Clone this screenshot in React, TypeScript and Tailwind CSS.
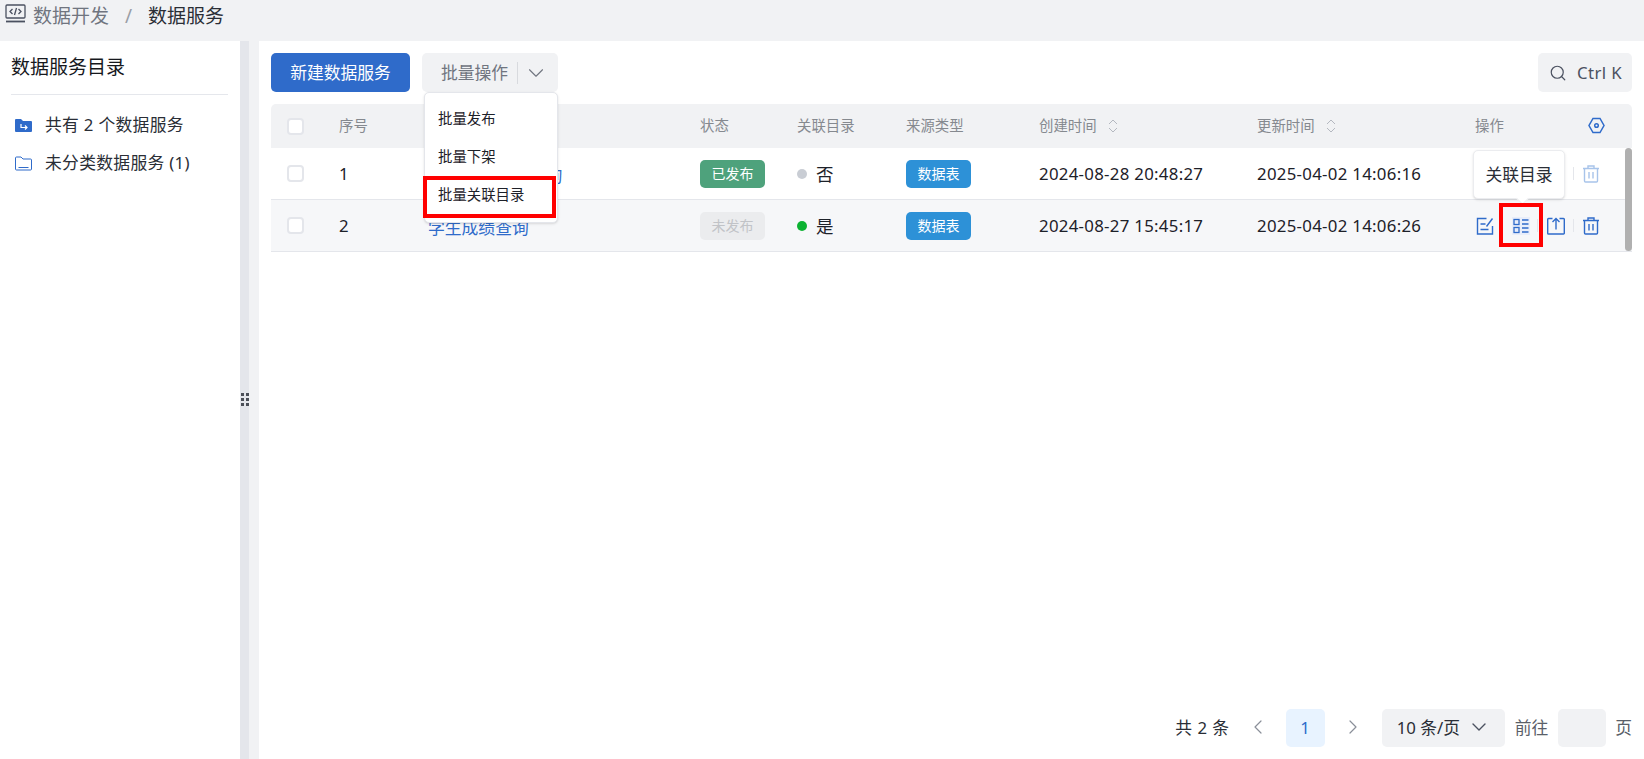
import React from "react";
import { ChevronDown, ChevronLeft, ChevronRight, Search } from "lucide-react";

const font = { fontFamily: '"Noto Sans", "Noto Sans CJK SC", sans-serif' };
const cols = "grid grid-cols-[68px_89px_272px_97px_109px_133px_218px_218px_1fr] items-center";

function Checkbox() {
  return <div className="ml-[16px] w-[17px] h-[17px] rounded-[4px] border-2 border-[#e4e6eb] bg-white" />;
}

function SortIcon() {
  return (
    <svg width="10" height="16" viewBox="0 0 10 16" fill="none" stroke="#b4b8c0" strokeWidth="1" className="ml-[11px]">
      <path d="M1 6l4-4 4 4M1 10l4 4 4-4" />
    </svg>
  );
}

function EditIcon() {
  return (
    <svg width="18" height="18" viewBox="0 0 18 18" fill="none" stroke="#2f6bca" strokeWidth="1.4">
      <path d="M16.5 9v8H1.5V1.5h9" />
      <path d="M4.5 7h5M4.5 12.5h8" />
      <path d="M10.5 9.5 16.5 1.5" />
    </svg>
  );
}

function ListIcon() {
  return (
    <svg width="16" height="16" viewBox="0 0 16 16" fill="none" stroke="#2f6bca" strokeWidth="1.3">
      <rect x="1" y="1.5" width="5" height="5" />
      <rect x="1" y="9.5" width="5" height="5" />
      <path d="M9 2h6.5M9 6h6.5M9 10h6.5M9 14h6.5" />
    </svg>
  );
}

function UploadIcon() {
  return (
    <svg width="18" height="18" viewBox="0 0 18 18" fill="none" stroke="#2f6bca" strokeWidth="1.4">
      <path d="M5.5 1.5h-4a.8.8 0 0 0-.8.8v13.9c0 .5.4.8.8.8h15a.8.8 0 0 0 .8-.8V2.300a.8.8 0 0 0-.8-.8h-4" />
      <path d="M9 12.500V1.500M5.500 5 9 1.500 12.500 5" />
    </svg>
  );
}

function TrashIcon({ faded }: { faded?: boolean }) {
  return (
    <svg width="16" height="18" viewBox="0 0 16 18" fill="none" stroke={faded ? "#a8c4ea" : "#2f6bca"} strokeWidth="1.4">
      <path d="M0 3.500h16M5 3.500V1h6v2.500" />
      <path d="M1.500 3.500V16a1 1 0 0 0 1 1h11a1 1 0 0 0 1-1V3.500" />
      <path d="M6 7v6.500M10 7v6.500" />
    </svg>
  );
}

function Divider({ className = "" }: { className?: string }) {
  return <div className={`w-px h-[13px] bg-[#e4e6eb] ${className}`} />;
}

function Actions({ faded }: { faded?: boolean }) {
  return (
    <div className="flex items-center pl-[1px]">
      <EditIcon />
      <Divider className="ml-[8px]" />
      <div className="ml-[9px] flex items-center justify-center w-[18px] h-[18px] bg-[#e9eefa]">
        <ListIcon />
      </div>
      <Divider className="ml-[7px]" />
      <div className="ml-[9px]"><UploadIcon /></div>
      <Divider className="ml-[8px]" />
      <div className="ml-[9px]"><TrashIcon faded={faded} /></div>
    </div>
  );
}

const rows = [
  { no: 1, name: "学生基本信息查询", published: true, linked: false, created: "2024-08-28 20:48:27", updated: "2025-04-02 14:06:16" },
  { no: 2, name: "学生成绩查询", published: false, linked: true, created: "2024-08-27 15:45:17", updated: "2025-04-02 14:06:26" },
];

export default function App() {
  return (
    <div className="w-[1644px] h-[759px] flex flex-col bg-[#f1f2f4] overflow-hidden text-[#1d2129]" style={font}>
      <header className="h-[41px] shrink-0 flex items-center pl-[5px] pb-[8px] text-[19px] leading-none">
        <svg width="21" height="20" viewBox="0 0 21 20" fill="none" stroke="#4b5160" strokeWidth="1.300" className="-mt-[6px]">
          <rect x="1" y="1" width="19" height="13" rx="1" />
          <path d="M7.500 5 5 7.500 7.500 10M13.500 5 16 7.500 13.500 10M11.500 4 9.500 11" />
          <path d="M1 17.500h19" strokeWidth="1.800" />
        </svg>
        <span className="ml-[7px] text-[#70757f]">数据开发</span>
        <span className="ml-[16px] text-[#9a9ea6]">/</span>
        <span className="ml-[16px] text-[#2a2e36]">数据服务</span>
      </header>

      <div className="flex-1 flex min-h-0">
        <aside className="w-[240px] shrink-0 bg-white px-[12px]">
          <div className="h-[54px] border-b border-[#e5e7ec] flex items-center text-[19px] text-[#16181d] -ml-[1px]">数据服务目录</div>
          <div className="mt-[11px] flex flex-col text-[16.800px] text-[#2a2e36] tracking-[0.3px]">
            <div className="h-[38px] flex items-center">
              <svg width="17" height="15" viewBox="0 0 17 15" className="ml-[3px]">
                <path d="M0 2a1 1 0 0 1 1-1h5l2 2h8a1 1 0 0 1 1 1v9a1 1 0 0 1-1 1H1a1 1 0 0 1-1-1z" fill="#2f6bca" />
                <path d="M6 6v3.500h6M10 7.500l2 2-2 2" fill="none" stroke="#fff" strokeWidth="1.200" />
              </svg>
              <span className="ml-[13px]">共有 2 个数据服务</span>
            </div>
            <div className="h-[38px] flex items-center">
              <svg width="17" height="15" viewBox="0 0 17 15" fill="none" stroke="#2f6bca" strokeWidth="1" className="ml-[3px]">
                <path d="M.5 2a1 1 0 0 1 1-1h4.500l2 2h7.500a1 1 0 0 1 1 1v9a1 1 0 0 1-1 1h-14a1 1 0 0 1-1-1z" />
                <path d="M3.500 11.500h10" />
              </svg>
              <span className="ml-[13px]">未分类数据服务 (1)</span>
            </div>
          </div>
        </aside>

        <div className="w-[19px] shrink-0 flex bg-[#f1f2f4]">
          <div className="w-[9px] bg-[#e4e6eb] relative">
            <div className="absolute left-[1px] top-[352px] grid grid-cols-2 gap-x-[2px] gap-y-[2px]">
              {Array.from({ length: 6 }).map((_, i) => (
                <div key={i} className="w-[3px] h-[3px] bg-[#4b4f58]" />
              ))}
            </div>
          </div>
        </div>

        <main className="flex-1 bg-white relative flex flex-col pl-[12px] pr-[12px]">
          <div className="mt-[12px] h-[39px] shrink-0 flex items-center">
            <button className="w-[139px] h-[39px] rounded-[5px] bg-[#2f6bca] text-white text-[16.800px]">新建数据服务</button>
            <div className="ml-[12px] w-[136px] h-[39px] rounded-[5px] bg-[#f1f2f4] flex items-center text-[16.800px] text-[#70757f]">
              <span className="ml-[19px]">批量操作</span>
              <div className="ml-[9px] w-px h-[22px] bg-[#d8dade]" />
              <ChevronDown size={26} strokeWidth={1} className="ml-[5px] text-[#70757f]" />
            </div>
            <div className="ml-auto w-[94px] h-[39px] rounded-[5px] bg-[#f1f2f4] flex items-center text-[16.800px] text-[#4b5160]">
              <Search size={18} strokeWidth={1.600} className="ml-[11px] text-[#4b5160]" />
              <span className="ml-[10px] tracking-[0.4px]">Ctrl K</span>
            </div>
          </div>

          <div className="mt-[12px] relative">
            <div className={`${cols} h-[44px] bg-[#f1f2f4] rounded-t-[5px] text-[14.400px] text-[#85898f]`}>
              <Checkbox />
              <div>序号</div>
              <div />
              <div>状态</div>
              <div>关联目录</div>
              <div>来源类型</div>
              <div className="flex items-center">创建时间<SortIcon /></div>
              <div className="flex items-center">更新时间<SortIcon /></div>
              <div className="flex items-center justify-between">
                <span>操作</span>
                <svg width="17" height="17" viewBox="0 0 17 17" fill="none" stroke="#2f6bca" strokeWidth="1.500" className="mr-[27px]">
                  <path d="M5 1.500h7l4 7-4 7H5l-4-7z" />
                  <circle cx="8.500" cy="8.500" r="1.800" />
                </svg>
              </div>
            </div>

            {rows.map((r) => (
              <div
                key={r.no}
                className={`${cols} h-[52px] border-b border-[#e4e6eb] text-[16.800px] ${r.no === 2 ? "bg-[#f6f7f9]" : "bg-white"}`}
              >
                <Checkbox />
                <div>{r.no}</div>
                <div className="text-[#2f6bca] pt-[4px]">{r.name}</div>
                <div>
                  {r.published ? (
                    <div className="w-[65px] h-[28px] rounded-[5px] bg-[#4ea27c] text-white text-[14px] flex items-center justify-center">已发布</div>
                  ) : (
                    <div className="w-[65px] h-[28px] rounded-[5px] bg-[#ebecee] text-[#c1c3c7] text-[14px] flex items-center justify-center">未发布</div>
                  )}
                </div>
                <div className="flex items-center">
                  <div className={`w-[10px] h-[10px] rounded-full ${r.linked ? "bg-[#0cb232]" : "bg-[#c9cdd4]"}`} />
                  <span className="ml-[9px] pt-[2px] text-[17.500px]">{r.linked ? "是" : "否"}</span>
                </div>
                <div>
                  <div className="w-[65px] h-[28px] rounded-[5px] bg-[#2d91d7] text-white text-[14px] flex items-center justify-center">数据表</div>
                </div>
                <div className="tracking-[0.3px]">{r.created}</div>
                <div className="tracking-[0.3px]">{r.updated}</div>
                <div><Actions faded={r.no === 1} /></div>
              </div>
            ))}

            <div className="absolute right-0 top-[44px] w-[7px] h-[103px] rounded-full bg-[#b0b0b0]" />

            <div className="absolute left-[1202px] top-[46px] w-[92px] h-[49px] rounded-[5px] bg-white border border-[#ebecef] shadow-sm flex items-center justify-center text-[16.800px] text-[#2a2e36]">
              关联目录
              <div className="absolute left-[44px] bottom-[-5px] w-[9px] h-[9px] rotate-45 bg-white border-r border-b border-[#ebecef]" />
            </div>
            <div className="absolute left-[1228px] top-[99px] w-[44px] h-[44px] border-[4px] border-[#ff0000]" />
          </div>

          <div className="absolute left-[165px] top-[51px] w-[134px] h-[131px] rounded-[5px] bg-white border border-[#e4e6eb] shadow-sm text-[14.400px] text-[#1d2129] pl-[13px]">
            <div className="h-[38px] mt-[7px] flex items-center">批量发布</div>
            <div className="h-[38px] flex items-center">批量下架</div>
            <div className="h-[38px] flex items-center">批量关联目录</div>
          </div>
          <div className="absolute left-[164px] top-[135px] w-[133px] h-[42px] border-[4px] border-[#ff0000]" />

          <div className="mt-auto mb-[12px] h-[38px] shrink-0 flex items-center justify-end text-[16.800px]">
            <span className="text-[#2a2e36] tracking-[0.5px]">共 2 条</span>
            <ChevronLeft size={24} strokeWidth={1.200} className="ml-[16px] -mt-[2px] text-[#8a8f99]" />
            <div className="ml-[16px] w-[39px] h-[38px] rounded-[5px] bg-[#e8f3ff] text-[#2f6bca] flex items-center justify-center">1</div>
            <ChevronRight size={24} strokeWidth={1.200} className="ml-[16px] -mt-[2px] text-[#8a8f99]" />
            <div className="ml-[17px] w-[123px] h-[38px] rounded-[5px] bg-[#f1f2f4] flex items-center text-[#2a2e36]">
              <span className="ml-[15px]">10 条/页</span>
              <ChevronDown size={24} strokeWidth={1.400} className="ml-[7px] -mt-[2px] text-[#4b5160]" />
            </div>
            <span className="ml-[10px] text-[#5a5f69]">前往</span>
            <div className="ml-[10px] w-[48px] h-[38px] rounded-[5px] bg-[#f1f2f4]" />
            <span className="ml-[9px] text-[#5a5f69]">页</span>
          </div>
        </main>
      </div>
    </div>
  );
}
